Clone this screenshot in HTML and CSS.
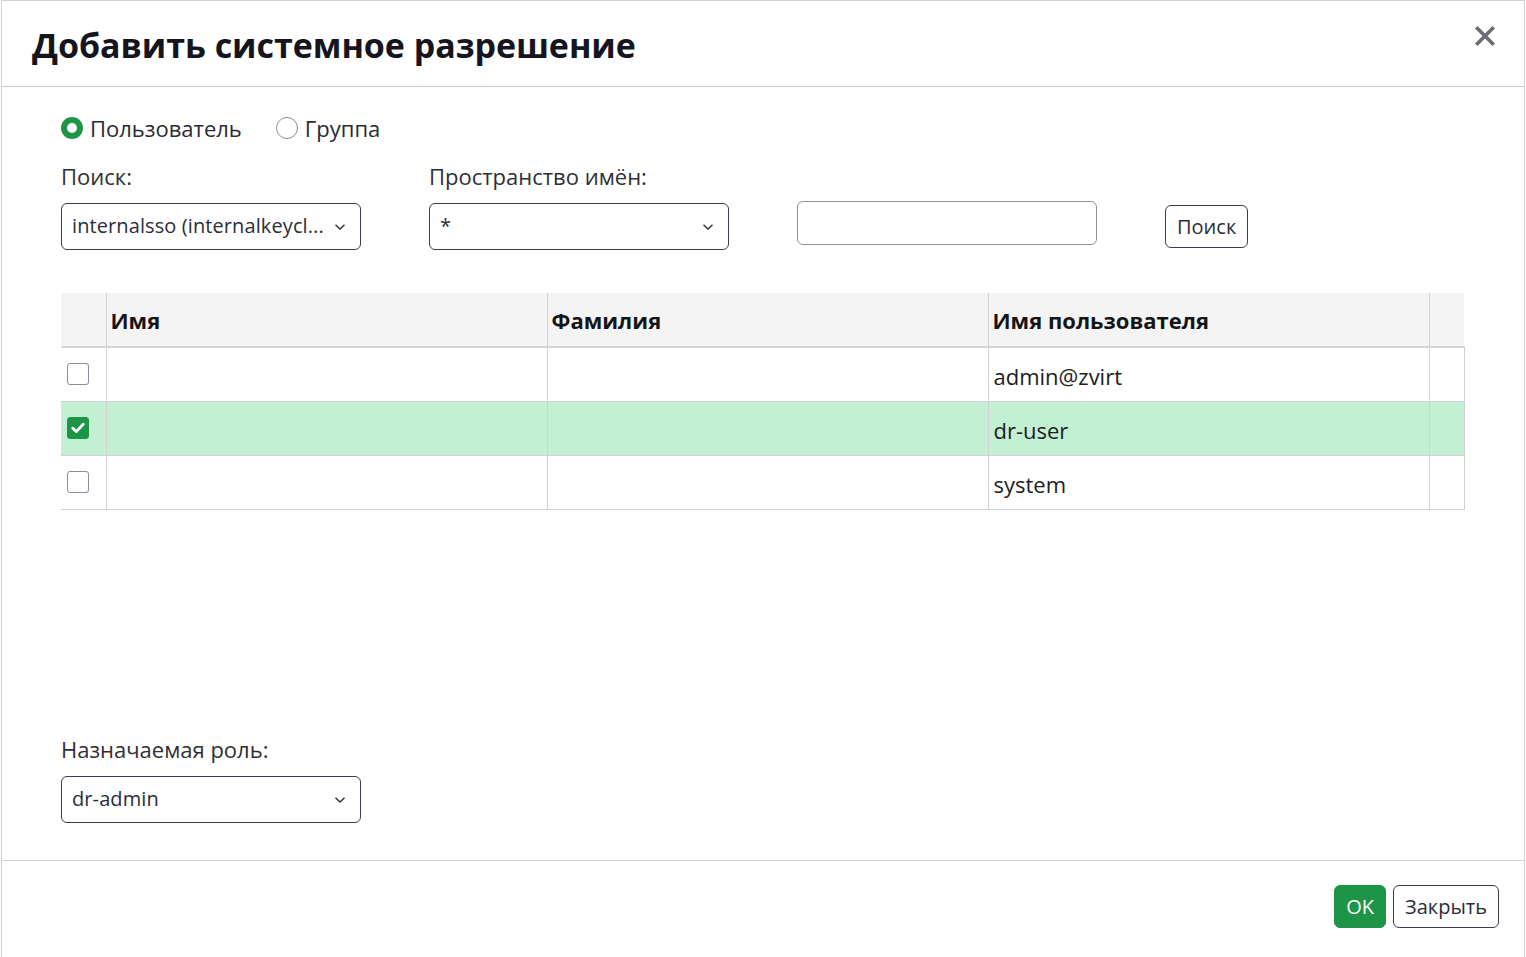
FILE: index.html
```html
<!DOCTYPE html>
<html lang="ru">
<head>
<meta charset="utf-8">
<title>Добавить системное разрешение</title>
<link rel="stylesheet" href="styles.css">
</head>
<body>
<div class="modal">
  <div class="modal-header">
    <h1 class="modal-title">Добавить системное разрешение</h1>
    <button class="close-btn" aria-label="Закрыть">
      <svg width="20" height="20" viewBox="0 0 20 20"><path d="M2.5 2.5 L17.5 17.5 M17.5 2.5 L2.5 17.5" stroke="#6a6e73" stroke-width="3.6" stroke-linecap="square" fill="none"/></svg>
    </button>
  </div>
  <div class="modal-body">
    <div class="radio-row">
      <label class="radio"><span class="radio-dot checked"></span>Пользователь</label>
      <label class="radio"><span class="radio-dot"></span>Группа</label>
    </div>
    <div class="search-row">
      <div class="field">
        <div class="field-label">Поиск:</div>
        <div class="select"><span class="select-text">internalsso (internalkeycl...</span><svg class="chev" width="12" height="8" viewBox="0 0 12 8"><path d="M1.5 1.8 L6 6 L10.5 1.8" stroke="#2f3142" stroke-width="1.5" fill="none"/></svg></div>
      </div>
      <div class="field">
        <div class="field-label">Пространство имён:</div>
        <div class="select"><span class="select-text">*</span><svg class="chev" width="12" height="8" viewBox="0 0 12 8"><path d="M1.5 1.8 L6 6 L10.5 1.8" stroke="#2f3142" stroke-width="1.5" fill="none"/></svg></div>
      </div>
      <div class="text-input"></div>
      <button class="btn-outline search-btn">Поиск</button>
    </div>
    <table class="grid">
      <colgroup>
        <col class="c-check"><col class="c-main"><col class="c-main"><col class="c-main"><col class="c-end">
      </colgroup>
      <thead>
        <tr><th></th><th>Имя</th><th>Фамилия</th><th>Имя пользователя</th><th></th></tr>
      </thead>
      <tbody>
        <tr><td class="chk-cell"><span class="checkbox"></span></td><td></td><td></td><td>admin@zvirt</td><td class="end"></td></tr>
        <tr class="selected"><td class="chk-cell"><span class="checkbox on"><svg width="14" height="12" viewBox="0 0 14 12"><path d="M1.8 6.2 L5.3 9.6 L12.2 2.2" stroke="#fff" stroke-width="2.8" fill="none" stroke-linecap="round" stroke-linejoin="round"/></svg></span></td><td></td><td></td><td>dr-user</td><td class="end"></td></tr>
        <tr><td class="chk-cell"><span class="checkbox"></span></td><td></td><td></td><td>system</td><td class="end"></td></tr>
      </tbody>
    </table>
    <div class="role-field">
      <div class="field-label">Назначаемая роль:</div>
      <div class="select"><span class="select-text">dr-admin</span><svg class="chev" width="12" height="8" viewBox="0 0 12 8"><path d="M1.5 1.8 L6 6 L10.5 1.8" stroke="#2f3142" stroke-width="1.5" fill="none"/></svg></div>
    </div>
  </div>
  <div class="modal-footer">
    <button class="btn-primary">OK</button>
    <button class="btn-outline">Закрыть</button>
  </div>
</div>
</body>
</html>
```
FILE: styles.css
```css
html, body {
  margin: 0;
  padding: 0;
  background: #ffffff;
}
body {
  font-family: "Open Sans", "Noto Sans", sans-serif;
  color: #151515;
  overflow: hidden;
}
.modal {
  margin-left: 1px;
  width: 1522px;
  height: 1000px;
  border: 1px solid #d2d2d2;
  border-bottom: none;
  background: #fff;
}
.modal-header {
  height: 85px;
  border-bottom: 1px solid #c7cad8;
  display: flex;
  align-items: center;
  justify-content: space-between;
  padding: 0 30px 0 30px;
}
.modal-title {
  margin: 0;
  font-size: 34px;
  font-weight: 700;
  color: #151520;
  line-height: 40px;
  padding-top: 3px;
  letter-spacing: -0.05px;
}
.close-btn {
  border: none;
  background: none;
  padding: 0;
  margin-top: -16px;
  margin-right: -1px;
  width: 20px;
  height: 20px;
  display: flex;
}
.modal-body {
  padding: 27px 59px 0 59px;
  height: 746px;
  border-bottom: 1px solid #d2d2d2;
  display: flex;
  flex-direction: column;
}
.radio-row {
  display: flex;
  gap: 34px;
  height: 28px;
  align-items: center;
}
.radio {
  display: flex;
  align-items: center;
  gap: 7px;
  font-size: 22px;
  color: #2a2a33;
}
.radio-dot {
  width: 22px;
  height: 22px;
  box-sizing: border-box;
  border-radius: 50%;
  border: 1px solid #8a8d99;
  background: #fff;
}
.radio-dot.checked {
  border: 6px solid #1e9447;
}
.search-row {
  display: flex;
  align-items: flex-end;
  margin-top: 20px;
}
.field {
  display: flex;
  flex-direction: column;
  margin-right: 68px;
}
.field-label {
  font-size: 22px;
  line-height: 28px;
  color: #2f2f36;
  margin-bottom: 13px;
}
.select {
  width: 300px;
  height: 47px;
  box-sizing: border-box;
  border: 1px solid #3a3c4e;
  border-radius: 6px;
  display: flex;
  align-items: center;
  justify-content: space-between;
  padding: 0 14px 0 10px;
}
.select-text {
  font-size: 20px;
  color: #2b2d3a;
  margin-top: -2px;
  letter-spacing: 0.1px;
}
.chev {
  display: block;
}
.text-input {
  width: 300px;
  height: 44px;
  box-sizing: border-box;
  border: 1px solid #8f9196;
  border-radius: 6px;
  margin-bottom: 5px;
}
.btn-outline {
  font-family: inherit;
  font-size: 20px;
  color: #2b2d3a;
  background: #fff;
  border: 1px solid #3a3c4e;
  border-radius: 6px;
  height: 43px;
  padding: 0 11px;
  line-height: 1;
}
.search-btn {
  margin-left: 68px;
  margin-bottom: 2px;
}
.grid {
  margin-top: 43px;
  border-collapse: collapse;
  table-layout: fixed;
  width: 1403px;
  font-size: 22px;
}
.c-check { width: 45px; }
.c-main { width: 441px; }
.c-end { width: 35px; }
.grid th {
  background: #f4f4f4;
  height: 54px;
  box-sizing: border-box;
  text-align: left;
  font-weight: 700;
  color: #151515;
  padding: 0 4px;
  border-left: 1px solid #d2d2d2;
  border-bottom: 2px solid #d6d6d6;
  vertical-align: middle;
}
.grid th:first-child {
  border-left: none;
}
.grid td {
  height: 54px;
  padding: 0 5px;
  border-left: 1px solid #d2d2d2;
  border-bottom: 1px solid #d2d2d2;
  color: #1d1d22;
  vertical-align: middle;
  padding-top: 4px;
  box-sizing: border-box;
}
.grid td:first-child {
  border-left: none;
}
.grid td.end {
  border-right: 1px solid #d2d2d2;
}
.grid tr.selected td {
  background: #c3f0d3;
}
.chk-cell {
  padding: 0 !important;
  text-align: left;
}
.checkbox {
  display: flex;
  align-items: center;
  justify-content: center;
  width: 22px;
  height: 22px;
  box-sizing: border-box;
  border: 1px solid #8a8ca0;
  border-radius: 3px;
  margin-left: 6px;
  background: #fff;
}
.checkbox.on {
  background: #1e9447;
  border-color: #1e9447;
}
.role-field {
  margin-top: auto;
  margin-bottom: 37px;
  display: flex;
  flex-direction: column;
}
.modal-footer {
  display: flex;
  justify-content: flex-end;
  gap: 7px;
  padding: 24px 25px 0 0;
}
.btn-primary {
  font-family: inherit;
  font-size: 20px;
  color: #fff;
  background: #1e9447;
  border: 1px solid #1e9447;
  border-radius: 6px;
  height: 43px;
  width: 52px;
  padding: 0;
  line-height: 1;
}
```
